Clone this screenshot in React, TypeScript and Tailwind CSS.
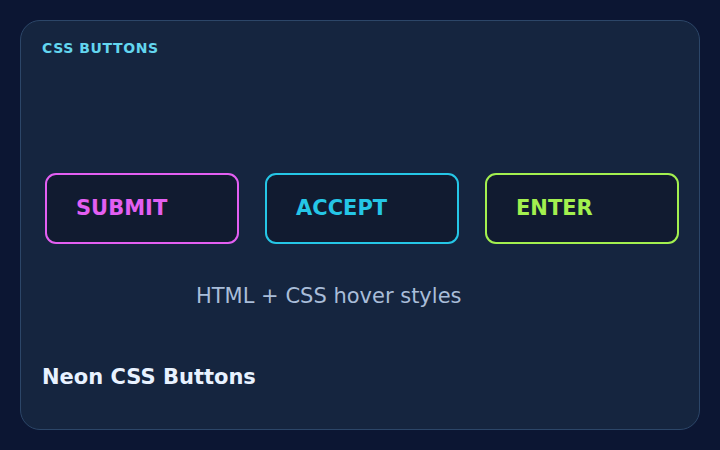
const buttons = [
  { label: "SUBMIT", cls: "border-[#e35ff2] text-[#e35ff2]" },
  { label: "ACCEPT", cls: "border-[#25c6e6] text-[#25c6e6]" },
  { label: "ENTER", cls: "border-[#a3f04f] text-[#a3f04f]" },
];

export default function App() {
  return (
    <div
      className="w-[720px] h-[450px] bg-[#0c1633] p-5"
      style={{ fontFamily: '"DejaVu Sans", sans-serif' }}
    >
      <div className="w-full h-full rounded-[20px] border border-[#2c4668] bg-[#15253f] pt-[19px] pl-[21px] pr-[15px] flex flex-col">
        <h4 className="text-[14px] leading-4 font-bold tracking-[0.6px] text-[#63d6ef]">CSS BUTTONS</h4>

        <div className="flex flex-row gap-[26px] ml-[3px] mt-[117px]">
          {buttons.map((b) => (
            <button
              key={b.label}
              className={`w-[194px] h-[71px] shrink-0 rounded-[11px] border-2 bg-[#111b30] pl-[29px] flex items-center text-left text-[21px] font-bold hover:cursor-pointer ${b.cls}`}
            >
              {b.label}
            </button>
          ))}
        </div>

        <p className="mt-[38px] ml-[154px] text-[21px] leading-7 text-[#a9bdd9]">HTML + CSS hover styles</p>

        <h4 className="mt-[53px] text-[21px] leading-7 font-bold text-[#e8f2ff]">Neon CSS Buttons</h4>
      </div>
    </div>
  );
}
